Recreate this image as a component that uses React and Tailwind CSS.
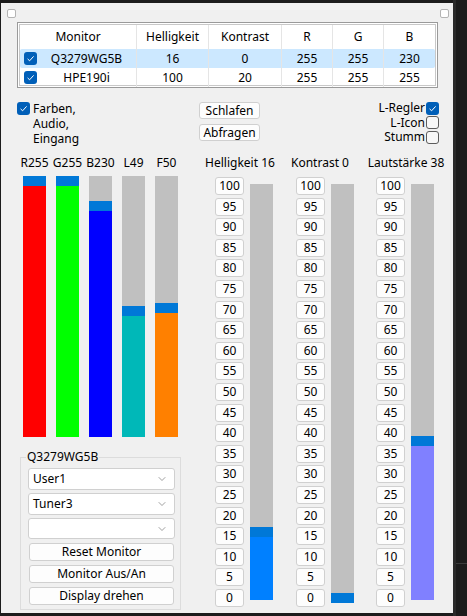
import { ChevronDown } from 'lucide-react';

const monitors = [
    { name: 'Q3279WG5B', hell: 16, kon: 0, r: 255, g: 255, b: 230, selected: true },
    { name: 'HPE190i', hell: 100, kon: 20, r: 255, g: 255, b: 255, selected: false },
];

// colour bars on the left: gray track starts 4px under the column top
const colorBars = [
    { label: 'R255', fill: 251, color: 'bg-[#ff0000]' },
    { label: 'G255', fill: 251, color: 'bg-[#00ff00]' },
    { label: 'B230', fill: 226, color: 'bg-[#0000ff]' },
    { label: 'L49', fill: 121, color: 'bg-[#00b8b8]' },
    { label: 'F50', fill: 124, color: 'bg-[#ff8000]' },
];

const sliders = [
    { label: 'Helligkeit 16', value: 16, color: 'bg-[#0080ff]', shift: '-translate-x-[4px]' },
    { label: 'Kontrast 0', value: 0, color: 'bg-[#0080ff]', shift: '-translate-x-[5px]' },
    { label: 'Lautstärke 38', value: 38, color: 'bg-[#8080ff]', shift: 'translate-x-[1px]' },
];

const steps = [100, 95, 90, 85, 80, 75, 70, 65, 60, 55, 50, 45, 40, 35, 30, 25, 20, 15, 10, 5, 0];

function Check({ checked }) {
    if (checked) {
        return (
            <span className="flex h-[13px] w-[13px] shrink-0 items-center justify-center rounded-[3px] bg-[#005fb8]">
                <svg width="13" height="13" viewBox="0 0 13 13">
                    <path d="M3.6 6.9 L5.6 8.8 L9.6 4.4" fill="none" stroke="#ffffff" strokeWidth="1" />
                </svg>
            </span>
        );
    }
    return <span className="h-[13px] w-[13px] shrink-0 rounded-[3px] border border-[#5c5c5c] bg-[#f7f7f7]" />;
}

function WinButton({ children, className = '' }) {
    return (
        <div className={`flex items-center justify-center rounded-[3px] border border-[#d0d0d0] bg-[#fdfdfd] text-[12px] leading-none text-black ${className}`}>
            {children}
        </div>
    );
}

function Combo({ value, className = '' }) {
    return (
        <div className={`flex items-center justify-between rounded-[3px] border border-[#d0d0d0] bg-white pl-[4px] pr-[6px] text-[12px] text-black ${className}`}>
            <span>{value}</span>
            <ChevronDown size={12} strokeWidth={1.2} color="#5f5f5f" />
        </div>
    );
}

function MonitorTable() {
    const cell = 'flex items-center justify-center border-r border-[#e5e5e5]';
    return (
        <div className="ml-[16px] mt-[4px] w-[421px] border border-[#9a9a9a] bg-white p-[1px]">
            <div className="h-[62px] border border-[#c8c8c8] bg-white text-[12px] text-black">
                <div className="grid h-[24px] grid-cols-[117px_72px_73px_51px_51px_51px]">
                    <div className={cell}>Monitor</div>
                    <div className={cell}>Helligkeit</div>
                    <div className={cell}>Kontrast</div>
                    <div className={cell}>R</div>
                    <div className={cell}>G</div>
                    <div className="flex items-center justify-center">B</div>
                </div>
                {monitors.map((m) => (
                    <div
                        key={m.name}
                        className={`grid h-[19px] grid-cols-[117px_72px_73px_51px_51px_51px] rounded-[2px] ${m.selected ? 'bg-[#cce8ff]' : ''}`}
                    >
                        <div className="flex items-center border-r border-[#e5e5e5] pl-[4px]">
                            <Check checked />
                            <span className="flex-1 text-center">{m.name}</span>
                        </div>
                        <div className={cell}>{m.hell}</div>
                        <div className={cell}>{m.kon}</div>
                        <div className={cell}>{m.r}</div>
                        <div className={cell}>{m.g}</div>
                        <div className="flex items-center justify-center">{m.b}</div>
                    </div>
                ))}
            </div>
        </div>
    );
}

function Options() {
    return (
        <div className="mt-[13px] flex h-[54px] items-start text-[12px] text-black">
            <div className="ml-[16px] flex w-[182px] items-start">
                <span className="mt-[1px]">
                    <Check checked />
                </span>
                <div className="ml-[3px] leading-[15px]">
                    Farben,
                    <br />
                    Audio,
                    <br />
                    Eingang
                </div>
            </div>
            <div className="mt-[1px] flex w-[61px] flex-col gap-[5px]">
                <WinButton className="h-[17px]">Schlafen</WinButton>
                <WinButton className="h-[17px]">Abfragen</WinButton>
            </div>
            <div className="ml-auto mr-[14px] flex flex-col items-end">
                {[
                    ['L-Regler', true],
                    ['L-Icon', false],
                    ['Stumm', false],
                ].map(([t, c]) => (
                    <div key={t} className="flex h-[14.5px] items-center">
                        <span className="mr-[1px] leading-[14px]">{t}</span>
                        <Check checked={c} />
                    </div>
                ))}
            </div>
        </div>
    );
}

function ColorBars() {
    return (
        <div className="flex gap-[10px] pl-[3px]">
            {colorBars.map((b) => (
                <div key={b.label} className="flex w-[23px] flex-col items-center">
                    <div className="h-[16px] whitespace-nowrap text-[12px] leading-[16px] text-black">{b.label}</div>
                    <div className="mt-[5px] flex h-[261px] w-[23px] flex-col justify-end">
                        <div className="bg-[#c0c0c0]" style={{ height: Math.max(0, 251 - b.fill) }} />
                        <div className="h-[10px] bg-[#0078d7]" />
                        <div className={b.color} style={{ height: b.fill }} />
                    </div>
                </div>
            ))}
        </div>
    );
}

function GroupBox() {
    return (
        <div className="relative mt-[20px] h-[153px] w-[161px] border border-[#dcdcdc] pl-[7px] pt-[10px]">
            <span className="absolute -top-[8px] left-[5px] bg-[#f0f0f0] px-[1px] text-[12px] leading-[14px] text-black">Q3279WG5B</span>
            <Combo value="User1" className="h-[22px] w-[147px]" />
            <Combo value="Tuner3" className="mt-[3px] h-[22px] w-[147px]" />
            <Combo value="" className="mt-[3px] h-[21px] w-[147px]" />
            <div className="ml-[1px] mt-[4px] flex w-[145px] flex-col gap-[4px]">
                <WinButton className="h-[18px]">Reset Monitor</WinButton>
                <WinButton className="h-[18px]">Monitor Aus/An</WinButton>
                <WinButton className="h-[18px]">Display drehen</WinButton>
            </div>
        </div>
    );
}

function Slider({ s, className = '' }) {
    // marker top measured from the bar top (bar spans 183..599)
    const markerTop = 592 - 4.13 * s.value - 183;
    const fillH = Math.max(0, 416 - (markerTop + 10));
    return (
        <div className={`flex w-[58px] shrink-0 flex-col items-center ${className}`}>
            <div className={`h-[16px] whitespace-nowrap text-[12px] leading-[16px] text-black ${s.shift}`}>{s.label}</div>
            <div className="mt-[6px] flex gap-[6px]">
                <div className="flex h-[430px] flex-col justify-between">
                    {steps.map((n) => (
                        <WinButton key={n} className="h-[18px] w-[29px]">
                            {n}
                        </WinButton>
                    ))}
                </div>
                <div className="relative mt-[7px] h-[416px] w-[23px] bg-[#c0c0c0]">
                    <div className={`absolute bottom-0 left-0 w-full ${s.color}`} style={{ height: fillH }} />
                    <div className="absolute left-0 h-[10px] w-full bg-[#0078d7]" style={{ top: markerTop }} />
                </div>
            </div>
        </div>
    );
}

export default function App() {
    return (
        <div className="flex h-[616px] w-[467px] bg-[#1c1c1c] font-['Noto_Sans','Open_Sans',sans-serif]">
            <div className="ml-[1px] mt-[3px] flex h-[610px] w-[452px] flex-col bg-[#f0f0f0]">
                <div className="flex justify-between pl-[6px] pr-[4px] pt-[6px]">
                    <span className="h-[9px] w-[9px] rounded-[2px] border border-[#b4b4b4] bg-white" />
                    <span className="h-[9px] w-[9px] rounded-[2px] border border-[#b4b4b4] bg-white" />
                </div>
                <MonitorTable />
                <Options />
                <div className="flex">
                    <div className="ml-[19px] w-[162px] shrink-0">
                        <ColorBars />
                        <GroupBox />
                    </div>
                    <Slider s={sliders[0]} className="ml-[33px]" />
                    <Slider s={sliders[1]} className="ml-[23px]" />
                    <Slider s={sliders[2]} className="ml-[22px]" />
                </div>
            </div>
            <div className="flex flex-1 flex-col border-l-[3px] border-[#2a2a2a]">
                <div className="h-[563px]" />
                <div className="h-[1px] bg-[#3c3c3c]" />
            </div>
        </div>
    );
}
